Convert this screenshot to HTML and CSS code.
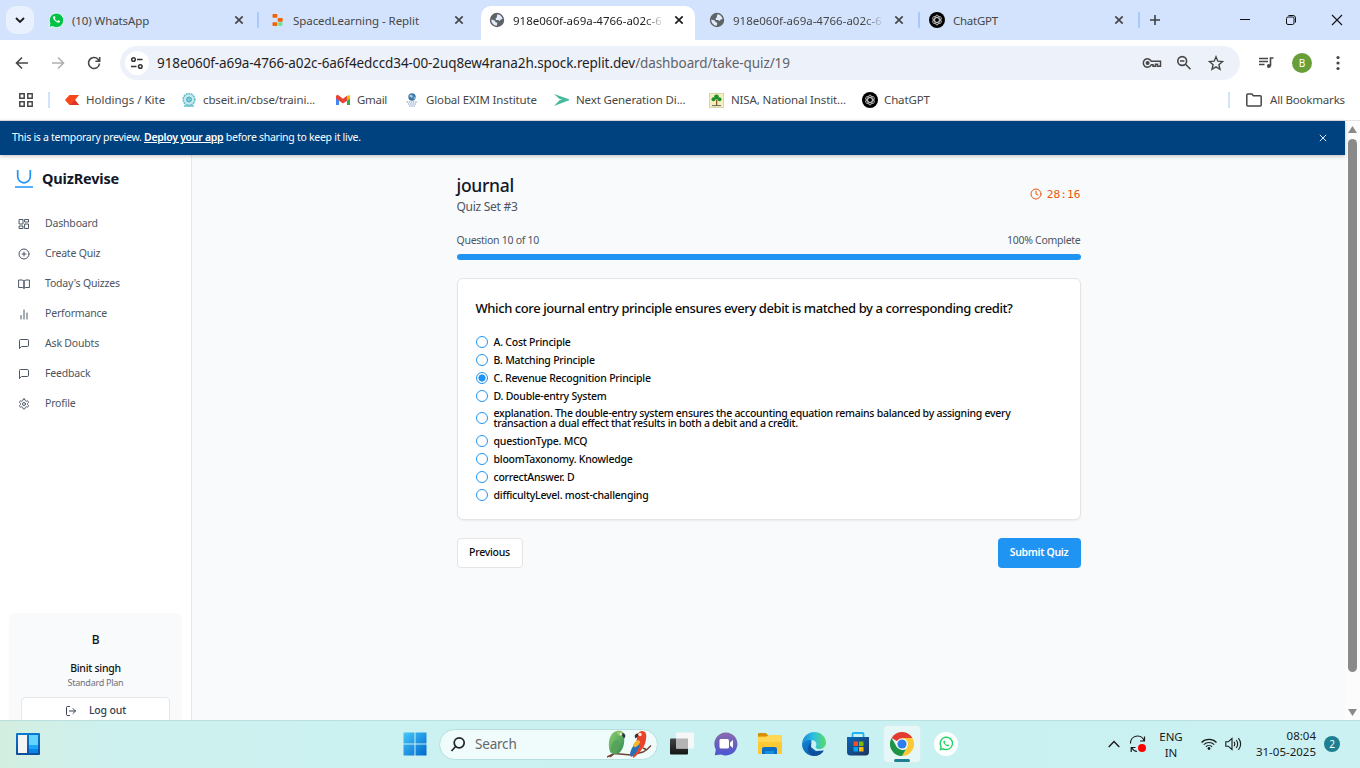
FILE: index.html
```html
<!DOCTYPE html>
<html lang="en">
<head>
<meta charset="utf-8">
<title>QuizRevise</title>
<link rel="stylesheet" href="styles.css">
</head>
<body>
<svg class="defs" width="0" height="0">
  <defs>
    <symbol id="x" viewBox="0 0 10 10"><path d="M1.300 1.300l7.400 7.400M8.700 1.300L1.300 8.700" stroke="currentColor" fill="none" stroke-width="1.700"/></symbol>
    <symbol id="globe" viewBox="0 0 16 16"><circle cx="8" cy="8" r="7.200" fill="#5f6368"/><path d="M8.500 2.300c2.600.4 4.600 2.300 5 4.700l-1.700.5-1.300 1.500-1.300-1-2.200.1-.5-1.600 1.300-1 .1-1.500zM2.300 7.500l3.400 1 1 1.700 1.600.5-.5 3c-3.200-.1-5.600-2.700-5.500-6.200z" fill="#e3ecfb"/></symbol>
    <symbol id="gpt" viewBox="0 0 16 16"><circle cx="8" cy="8" r="8" fill="#000"/><g fill="none" stroke="#ddd" stroke-width=".8"><ellipse cx="8" cy="8" rx="2.300" ry="4.900"/><ellipse cx="8" cy="8" rx="2.300" ry="4.900" transform="rotate(60 8 8)"/><ellipse cx="8" cy="8" rx="2.300" ry="4.900" transform="rotate(120 8 8)"/></g></symbol>
    <symbol id="wa" viewBox="0 0 24 24"><path d="M4.500 19.500l1-4A8.200 8.200 0 1 1 8.600 18.400z" fill="none" stroke="currentColor" stroke-width="2" stroke-linejoin="round"/><path d="M9 7.800c-1.200 1.100-.5 3 1.600 5.200 2.200 2.100 4.500 2.800 5.600 1.300.5-.8.100-1.100-1.500-1.800-.6-.2-.8.800-1.300.8-1 0-2.900-2-3-2.900 0-.4.700-.7.500-1.200-.5-1.500-1-2.200-1.900-1.400z" fill="currentColor"/></symbol>
    <symbol id="chat" viewBox="0 0 24 24"><path d="M21 15a2 2 0 0 1-2 2H7l-4 4V5a2 2 0 0 1 2-2h14a2 2 0 0 1 2 2z"/></symbol>
  </defs>
</svg>

<header class="tabstrip">
  <button class="tabsearch"><svg width="10" height="7" viewBox="0 0 10 7"><path d="M1 1l4 4 4-4" fill="none" stroke="#1f1f1f" stroke-width="1.900"/></svg></button>
  <div class="tab tab-whatsapp"><svg width="16" height="16" viewBox="0 0 16 16"><path d="M1 15.500l1-4A7.200 7.200 0 1 1 4.600 14.400z" fill="#00c244" stroke="#fff" stroke-width=".8"/><path d="M5.700 4.200c-1.300 1-.6 2.700 1.200 4.600 1.900 1.800 4 2.500 5 1.100.5-.9 0-1-1.500-1.600-.6-.2-.7.800-1.200.7C8.300 8.800 7 7.600 7 6.800c0-.4.500-.6.400-1.100-.4-1.400-.8-2.200-1.700-1.500z" fill="#fff"/></svg><span class="t">(10) WhatsApp</span><svg class="close" width="10" height="10"><use href="#x"/></svg></div>
  <i class="sep"></i>
  <div class="tab tab-replit"><svg width="16" height="16" viewBox="0 0 16 16"><rect x="2.500" y="2" width="4.800" height="3.800" rx=".8" fill="#f26207"/><rect x="7.700" y="6" width="5" height="3.700" rx=".8" fill="#f26207"/><rect x="2.500" y="10.200" width="4.800" height="3.800" rx=".8" fill="#f26207"/><rect x="8" y="10" width="4.500" height="4" rx="1.500" fill="#6ee391"/></svg><span class="t">SpacedLearning - Replit</span><svg class="close" width="10" height="10"><use href="#x"/></svg></div>
  <div class="tab active"><svg width="16" height="16"><use href="#globe"/></svg><span class="t fade">918e060f-a69a-4766-a02c-6</span><svg class="close" width="10" height="10"><use href="#x"/></svg></div>
  <div class="tab tab-copy"><svg width="16" height="16"><use href="#globe"/></svg><span class="t fade">918e060f-a69a-4766-a02c-6</span><svg class="close" width="10" height="10"><use href="#x"/></svg></div>
  <i class="sep"></i>
  <div class="tab tab-gpt"><svg width="16" height="16"><use href="#gpt"/></svg><span class="t">ChatGPT</span><svg class="close" width="10" height="10"><use href="#x"/></svg></div>
  <i class="sep"></i>
  <svg class="plus" width="12" height="12" viewBox="0 0 12 12"><path d="M6 1v10M1 6h10" stroke="#3c4043" stroke-width="1.600"/></svg>
  <div class="winctl">
    <svg width="12" height="12" viewBox="0 0 12 12"><path d="M1 5.500h10" stroke="#111"/></svg>
    <svg width="12" height="12" viewBox="0 0 12 12"><rect x="1.500" y="3" width="7.500" height="7.500" rx="1.500" fill="none" stroke="#111"/><path d="M3.500 1.500h4.500a2.500 2.500 0 0 1 2.500 2.500v4.500" fill="none" stroke="#111"/></svg>
    <svg width="12" height="12" viewBox="0 0 12 12"><path d="M1 1l10 10M11 1L1 11" stroke="#111" stroke-width="1.100"/></svg>
  </div>
</header>

<div class="toolbar">
  <svg class="tb" width="16" height="16" viewBox="0 0 16 16"><path d="M14 8H3M8 2.500L2.500 8 8 13.500" fill="none" stroke="#474747" stroke-width="1.600"/></svg>
  <svg class="tb" width="16" height="16" viewBox="0 0 16 16"><path d="M2 8h11M8 2.500L13.500 8 8 13.500" fill="none" stroke="#b0b0b0" stroke-width="1.600"/></svg>
  <svg class="tb" width="16" height="16" viewBox="0 0 16 16"><path d="M13.500 8.500A5.500 5.500 0 1 1 12 4.200L13.500 6M13.700 2v4.300H9.400" fill="none" stroke="#474747" stroke-width="1.600"/></svg>
  <div class="omnibox">
    <span class="site"><svg width="16" height="16" viewBox="0 0 16 16" fill="none" stroke="#333" stroke-width="1.500"><circle cx="4.500" cy="4.500" r="1.800"/><path d="M8 4.500h5.500M2 11.500h5.500"/><circle cx="11.300" cy="11.500" r="1.800"/></svg></span>
    <span class="t url">918e060f-a69a-4766-a02c-6a6f4edccd34-00-2uq8ew4rana2h.spock.replit.dev<em>/dashboard/take-quiz/19</em></span>
    <svg class="key" width="20" height="16" viewBox="0 0 20 16" fill="none" stroke="#474747" stroke-width="1.500"><path d="M9.300 6.200H18.500v5h-3v-2h-2v2h-2.500V9.800H9.300A4.200 4.200 0 1 1 9.300 6.200z"/><circle cx="5.600" cy="8" r="1.300" fill="#474747"/></svg>
    <svg width="16" height="16" viewBox="0 0 16 16" fill="none" stroke="#474747" stroke-width="1.600"><circle cx="6.200" cy="6" r="4.400"/><path d="M9.500 9.300l5 5M4 6h4.400"/></svg>
    <svg width="16" height="16" viewBox="0 0 16 16" fill="none" stroke="#474747" stroke-width="1.400"><path d="M8 1.800l1.800 4.400 4.700.4-3.600 3.100 1.100 4.600L8 11.900l-4 2.400 1.100-4.600L1.500 6.600l4.700-.4z"/></svg>
  </div>
  <svg class="media" width="16" height="16" viewBox="0 0 16 16" fill="none" stroke="#474747" stroke-width="1.600"><path d="M1 3.500h9M1 6.500h9M1 9.500h5.500M15.500 3h-3v8"/><circle cx="10.900" cy="11" r="2" fill="#474747" stroke="none"/></svg>
  <span class="avatar">B</span>
  <svg class="dots" width="4" height="16" viewBox="0 0 4 16" fill="#474747"><circle cx="2" cy="2.500" r="1.600"/><circle cx="2" cy="8" r="1.600"/><circle cx="2" cy="13.500" r="1.600"/></svg>
</div>

<nav class="bookmarks">
  <svg width="14" height="14" viewBox="0 0 14 14" fill="none" stroke="#474747" stroke-width="1.500"><path d="M.8.800h4.400v4.400H.8zM8.800.800h4.400v4.400H8.800zM.8 8.800h4.400v4.400H.8zM8.800 8.800h4.400v4.400H8.800z"/></svg>
  <i class="sep"></i>
  <a><svg width="14" height="14" viewBox="0 0 14 14"><path d="M0 7l4.500-5H14l-4 5 4 5H4.500z" fill="#f6461a"/><path d="M5 12l5-5 4 5z" fill="#db342c"/></svg><span class="t wide">Holdings / Kite</span></a>
  <a><svg width="14" height="14" viewBox="0 0 14 14"><circle cx="7" cy="6.500" r="5.800" fill="#c9eaf0" stroke="#63bfc9" stroke-width="1.600" stroke-dasharray="2 .6"/><circle cx="7" cy="6.500" r="2.500" fill="#7bcbd3" stroke="#4fa9b5"/><path d="M2 13h10" stroke="#63bfc9" stroke-width="1.500"/></svg><span class="t">cbseit.in/cbse/traini...</span></a>
  <a><svg width="14" height="14" viewBox="0 0 14 14"><path d="M0 3.500v8.500h3V6z" fill="#4285f4"/><path d="M14 3.500v8.500h-3V6z" fill="#34a853"/><path d="M11 2.800L14 2v3.500l-3 2.300z" fill="#fbbc04"/><path d="M0 3.500C0 2 1.500 1.500 2.500 2.300L7 5.800l4-3v5L7 10.500 0 5.500z" fill="#ea4335"/></svg><span class="t narrow">Gmail</span></a>
  <a><svg width="14" height="14" viewBox="0 0 14 14"><circle cx="7" cy="4" r="3.700" fill="#3f78a8"/><path d="M4 3l2-1.500L8 3 7 5zM8 5l2-1v2z" fill="#a5d0dd"/><path d="M1.500 9h11M3 11h8M4 13h6" stroke="#7697c3" stroke-width="1.200" stroke-dasharray="1.500 .7"/></svg><span class="t">Global EXIM Institute</span></a>
  <a><svg width="15" height="14" viewBox="0 0 15 14"><path d="M0 1l15 5.200v1L0 13l5.500-5.700 3-.6-3-.6z" fill="#45b99b"/></svg><span class="t">Next Generation Di...</span></a>
  <a><svg width="15" height="15" viewBox="0 0 15 15"><rect width="15" height="15" fill="#f3f0bd"/><rect x=".5" y=".5" width="14" height="14" fill="none" stroke="#d8d8ac"/><path d="M7 13V7h1.300v6z" fill="#93541e"/><circle cx="7.500" cy="4" r="2.400" fill="#218f2b"/><circle cx="4.500" cy="6.300" r="2" fill="#218f2b"/><circle cx="10.500" cy="6.300" r="2" fill="#218f2b"/><path d="M3 12.600h9" stroke="#666"/></svg><span class="t">NISA, National Instit...</span></a>
  <a class="gptlink"><svg width="16" height="16"><use href="#gpt"/></svg><span class="t">ChatGPT</span></a>
  <i class="sep"></i>
  <a class="all"><svg width="16" height="14" viewBox="0 0 16 14"><path d="M.8 12V2q0-1 1-1h4l1.600 1.800h6.800q1 0 1 1V12q0 1-1 1H1.800q-1 0-1-1z" fill="none" stroke="#474747" stroke-width="1.500"/></svg><span class="t">All Bookmarks</span></a>
</nav>

<div class="viewport">
  <div class="page">
    <div class="banner"><span class="t">This is a temporary preview. <b>Deploy your app</b> before sharing to keep it live.</span><svg width="8" height="8" viewBox="0 0 10 10"><path d="M1 1l8 8M9 1L1 9" stroke="#fff" fill="none" stroke-width="1.100"/></svg></div>
    <div class="app">
      <aside class="sidebar">
        <div class="brand"><svg width="18" height="18" viewBox="0 0 18 18" fill="none" stroke="#2094f3" stroke-width="1.700"><path d="M2.700 0v6.500a6.300 6.300 0 0 0 12.600 0V0M0 17h18"/></svg><span class="t">QuizRevise</span></div>
        <ul class="menu">
          <li><svg viewBox="0 0 24 24"><rect x="3" y="3" width="7" height="9"/><rect x="14" y="3" width="7" height="5"/><rect x="14" y="12" width="7" height="9"/><rect x="3" y="16" width="7" height="5"/></svg><span class="t">Dashboard</span></li>
          <li><svg viewBox="0 0 24 24"><circle cx="12" cy="12" r="10"/><path d="M8 12h8M12 8v8"/></svg><span class="t">Create Quiz</span></li>
          <li><svg viewBox="0 0 24 24"><path d="M2 4h6a4 4 0 0 1 4 4v13a3 3 0 0 0-3-2H2zM22 4h-6a4 4 0 0 0-4 4v13a3 3 0 0 1 3-2h7z"/></svg><span class="t">Today's Quizzes</span></li>
          <li><svg viewBox="0 0 24 24"><path d="M6 22v-7M12 22V4M18 22V10"/></svg><span class="t">Performance</span></li>
          <li><svg viewBox="0 0 24 24"><use href="#chat"/></svg><span class="t">Ask Doubts</span></li>
          <li><svg viewBox="0 0 24 24"><use href="#chat"/></svg><span class="t">Feedback</span></li>
          <li><svg viewBox="0 0 24 24"><path d="M12.220 2h-.44a2 2 0 0 0-2 2v.18a2 2 0 0 1-1 1.730l-.43.25a2 2 0 0 1-2 0l-.15-.08a2 2 0 0 0-2.730.730l-.22.380a2 2 0 0 0 .730 2.730l.15.1a2 2 0 0 1 1 1.720v.51a2 2 0 0 1-1 1.740l-.15.090a2 2 0 0 0-.730 2.730l.22.380a2 2 0 0 0 2.730.730l.15-.08a2 2 0 0 1 2 0l.43.25a2 2 0 0 1 1 1.730V20a2 2 0 0 0 2 2h.44a2 2 0 0 0 2-2v-.18a2 2 0 0 1 1-1.730l.43-.25a2 2 0 0 1 2 0l.15.08a2 2 0 0 0 2.730-.730l.22-.390a2 2 0 0 0-.730-2.730l-.15-.08a2 2 0 0 1-1-1.740v-.5a2 2 0 0 1 1-1.740l.15-.090a2 2 0 0 0 .730-2.730l-.22-.380a2 2 0 0 0-2.730-.730l-.15.08a2 2 0 0 1-2 0l-.43-.25a2 2 0 0 1-1-1.730V4a2 2 0 0 0-2-2z"/><circle cx="12" cy="12" r="3"/></svg><span class="t">Profile</span></li>
        </ul>
        <div class="user">
          <span class="initial">B</span>
          <span class="t name">Binit singh</span>
          <span class="t plan">Standard Plan</span>
          <button class="logout"><svg viewBox="0 0 24 24"><path d="M9 21H5a2 2 0 0 1-2-2V5a2 2 0 0 1 2-2h4M16 17l5-5-5-5M21 12H9"/></svg><span class="t">Log out</span></button>
        </div>
      </aside>
      <main class="content">
        <div class="quiz">
          <div class="head">
            <div><h1 class="t">journal</h1><p class="t">Quiz Set #3</p></div>
            <div class="timer"><svg viewBox="0 0 24 24"><circle cx="12" cy="12" r="10"/><path d="M12 6v6l4 2"/></svg><span class="t">28:16</span></div>
          </div>
          <div class="progress-row"><span class="t">Question 10 of 10</span><span class="t">100% Complete</span></div>
          <div class="progress"></div>
          <section class="card">
            <h2 class="t">Which core journal entry principle ensures every debit is matched by a corresponding credit?</h2>
            <div class="options">
              <label><i></i><span class="t">A. Cost Principle</span></label>
              <label><i></i><span class="t">B. Matching Principle</span></label>
              <label><i class="on"></i><span class="t">C. Revenue Recognition Principle</span></label>
              <label><i></i><span class="t">D. Double-entry System</span></label>
              <label class="long"><i></i><span>explanation. The double-entry system ensures the accounting equation remains balanced by assigning every transaction a dual effect that results in both a debit and a credit.</span></label>
              <label><i></i><span class="t">questionType. MCQ</span></label>
              <label><i></i><span class="t">bloomTaxonomy. Knowledge</span></label>
              <label><i></i><span class="t">correctAnswer. D</span></label>
              <label><i></i><span class="t">difficultyLevel. most-challenging</span></label>
            </div>
          </section>
          <div class="actions"><button class="prev">Previous</button><button class="submit">Submit Quiz</button></div>
        </div>
      </main>
    </div>
  </div>
  <div class="scrollbar"><svg width="9" height="7" viewBox="0 0 9 7"><path d="M4.500 0L9 7H0z" fill="#8a8a8a"/></svg><i></i><svg width="9" height="7" viewBox="0 0 9 7"><path d="M4.500 7L0 0h9z" fill="#8a8a8a"/></svg></div>
</div>

<footer class="taskbar">
  <svg class="widgets" width="24" height="22" viewBox="0 0 24 22"><defs><linearGradient id="wg" x2="0" y2="1"><stop stop-color="#0a78d1"/><stop offset="1" stop-color="#0c4f9c"/></linearGradient></defs><rect width="24" height="22" rx="1" fill="url(#wg)"/><rect x="2" y="2" width="9" height="18" fill="#f4f4f4"/><rect x="13" y="2" width="9" height="10" fill="#62d4fd"/><rect x="13" y="12" width="9" height="4" fill="#1ca4fb"/><rect x="13" y="16" width="9" height="4" fill="#0b84e8"/></svg>
  <div class="dock">
    <svg class="start" width="24" height="24" viewBox="0 0 24 24"><defs><linearGradient id="st" x2="1" y2="1"><stop stop-color="#46c8fb"/><stop offset="1" stop-color="#0067cb"/></linearGradient></defs><path d="M.5.500h11v11H.5zM12.500.500h11v11h-11zM.5 12.500h11v11H.5zM12.500 12.500h11v11h-11z" fill="url(#st)"/></svg>
    <div class="search"><svg width="16" height="16" viewBox="0 0 16 16" fill="none" stroke="#242424" stroke-width="1.700"><circle cx="9.200" cy="6.800" r="5"/><path d="M5.600 10.500L1.500 15"/></svg><span class="t">Search</span>
      <svg class="birds" width="45" height="28" viewBox="0 0 45 28"><defs><linearGradient id="gb" x2="1" y2="1"><stop stop-color="#8ed06f"/><stop offset="1" stop-color="#2f8a55"/></linearGradient></defs><path d="M0 27l7-3.500 17 1.500 12-3 4-2.500 4-4M3 27l5-4M40 20l-4-2" stroke="#6d4330" stroke-width="1.400" fill="none"/><path d="M3 22C0 12 3 2 10 1c5-1 8 2 7 6 1 6-1 13-5 16-3 2-7 1-9-1z" fill="url(#gb)"/><path d="M4 21c0-7 3-11 7-11 3 4 1 10-3 12z" fill="#57a35a"/><path d="M9.500 2.500c3-2 7-1 7.500 2-2 3-6 2-7.500-2z" fill="#9acb68"/><path d="M15.500 3c3.300.5 3.500 3.500 1.700 5.500L15 5.500z" fill="#2f3840"/><circle cx="13.800" cy="4" r=".9" fill="#fff"/><path d="M30 9c0-4 1.500-8 5-8 4 0 5 4 4 8-.6 7-5 12-10 17l-3 2c-1-4 2-13 4-19z" fill="#e9442a"/><path d="M23 24c1-6 4-10 8-11 3 2 0 8-4 12l-3 2z" fill="#2b6fb4"/><path d="M26 15c2-4 5-6 7-4 .5 2-2 5-5 6.500z" fill="#f8b82d"/><path d="M31 3.500c-3 0-4 2.500-2.500 5L31.500 6z" fill="#37322d"/><circle cx="33" cy="4.500" r="1.700" fill="#ffe8da"/></svg>
    </div>
    <svg class="taskview" width="24" height="24" viewBox="0 0 24 24"><defs><linearGradient id="tv" x2="0" y2="1"><stop stop-color="#444"/><stop offset="1" stop-color="#151515"/></linearGradient></defs><rect y="6.500" width="18" height="16" rx="1" fill="url(#tv)"/><rect x="6" y=".5" width="18" height="16" rx="1" fill="#f7f7f7"/><path d="M6 6.500h12v10H6z" fill="#b4b4b4"/></svg>
    <svg width="24" height="24" viewBox="0 0 24 24"><defs><linearGradient id="tm" x2="0" y2="1"><stop stop-color="#8b6aac"/><stop offset="1" stop-color="#4956d0"/></linearGradient></defs><path d="M12 .5a11.500 11.500 0 1 1-5 21.900L.8 23.200l1-5.600A11.500 11.500 0 0 1 12 .5z" fill="url(#tm)"/><rect x="5.500" y="7" width="9.500" height="9.500" rx="1.500" fill="#fff"/><path d="M16 10.500l3-2.500v8l-3-2.500z" fill="#fff"/></svg>
    <svg width="24" height="24" viewBox="0 0 24 24"><path d="M0 2q0-1 1-1h7l2.500 3H20v7H0z" fill="#d98f04"/><rect y="4.500" width="24" height="17.500" rx="1" fill="#fdc934"/><path d="M0 5h8l3-2h12q1 0 1 1v6H0z" fill="#ffd755"/><path d="M4 22v-5q0-2 2-2h11q2 0 2 2v5z" fill="#0b6ec4"/><path d="M7 19h9v3H7z" fill="#1391df"/></svg>
    <svg width="24" height="24" viewBox="0 0 24 24"><defs><linearGradient id="eg" x2="1"><stop stop-color="#1689d9"/><stop offset=".5" stop-color="#2fc1df"/><stop offset="1" stop-color="#58dc64"/></linearGradient><linearGradient id="eh" x2="1" y2="1"><stop stop-color="#1287d8"/><stop offset="1" stop-color="#0c4c99"/></linearGradient></defs><path d="M0 11.500C2 8 6 6.500 9.500 7L9 15l5 4 7.800-.5C19.700 22 16 24 12 24 5.400 24 0 18.600 0 12z" fill="url(#eh)"/><path d="M9.500 10.500c-3 7 3 12 12.300 8-2 3.500-6 5.700-10.300 5.300C5 22 4.500 13.500 9.500 10.500z" fill="#0e4f9b"/><path d="M0 11.500C.8 5 5.800 0 12 0c7 0 12 5 12 10.500 0 4-3 6.500-6.500 6.500-3 0-4.500-1.300-3.500-3 1.500-3-1-6-5-6-4 0-8 1.500-9 3.500z" fill="url(#eg)"/></svg>
    <svg width="24" height="24" viewBox="0 0 24 24"><defs><linearGradient id="sg" x2="1" y2="1"><stop stop-color="#0669bc"/><stop offset="1" stop-color="#21325c"/></linearGradient></defs><path d="M6.500 6V2q0-1 1-1h9q1 0 1 1v4" fill="none" stroke="#1eb4f4" stroke-width="1.800"/><path d="M1 5h22v15q0 3.500-3.500 3.500h-15Q1 23.500 1 20z" fill="url(#sg)"/><path d="M7.500 9.500H12V14H7.500z" fill="#f25022"/><path d="M13 9.500h4.500V14H13z" fill="#7fba00"/><path d="M7.500 15H12v4.500H7.500z" fill="#00a4ef"/><path d="M13 15h4.500v4.500H13z" fill="#ffb900"/></svg>
    <span class="running"><svg width="24" height="24" viewBox="0 0 24 24"><path d="M12 12L1.600 6A12 12 0 0 1 22.400 6z" fill="#e33b2e"/><path d="M12 6h10.400A12 12 0 0 1 12 24l5.200-9z" fill="#fcc934"/><path d="M1.600 6l5.200 9L12 18l3.800-.5L12 24A12 12 0 0 1 1.600 6z" fill="#1e9447"/><circle cx="12" cy="12" r="5.800" fill="#fff"/><circle cx="12" cy="12" r="4.600" fill="#2f7dea"/></svg></span>
    <span class="walogo"><svg width="18" height="18"><use href="#wa"/></svg></span>
  </div>
  <div class="tray">
    <svg width="12" height="8" viewBox="0 0 12 8"><path d="M.7 7L6 1.500 11.300 7" fill="none" stroke="#1b1b1b" stroke-width="1.400"/></svg>
    <svg class="sync" width="18" height="18" viewBox="0 0 18 18" fill="none" stroke="#1b1b1b" stroke-width="1.200"><path d="M1.500 8.500A7 7 0 0 1 15 5.500M15.500 1.500v4.500h-4.500M8 16.500a7 7 0 0 1-5.200-3.500M6.500 12.500H2.200v4.500"/><circle cx="13" cy="13" r="4" fill="#f00" stroke="none"/></svg>
    <div class="lang"><span class="t">ENG</span><span class="t">IN</span></div>
    <svg class="wifi" width="16" height="12" viewBox="0 0 16 12" fill="none" stroke="#1b1b1b" stroke-width="1.100"><path d="M.5 4.500a10.500 10.500 0 0 1 15 0M2.700 6.700a7.500 7.500 0 0 1 10.600 0M4.900 8.800a4.400 4.400 0 0 1 6.200 0"/><circle cx="8" cy="10.500" r="1.400" fill="#1b1b1b" stroke="none"/></svg>
    <svg width="17" height="14" viewBox="0 0 17 14" fill="none" stroke="#1b1b1b" stroke-width="1.100"><path d="M.8 4.800h2.400L7 1.500v11L3.200 9.200H.8zM9 4.800q1.500 2.200 0 4.400M11.200 3q3 4 0 8M13.400 1.200q4.500 5.800 0 11.600"/></svg>
    <div class="clock"><span class="t">08:04</span><span class="t">31-05-2025</span></div>
    <span class="badge">2</span>
  </div>
</footer>
</body>
</html>
```
FILE: styles.css
```css
* { box-sizing: border-box; }
body { margin: 0; width: 1360px; height: 768px; overflow: hidden; font-family: "Noto Sans", "Open Sans", sans-serif; font-size: 12px; color: #1f1f1f; display: flex; flex-direction: column; }
svg { display: block; flex: none; }
button { font: inherit; letter-spacing: inherit; padding: 0; border: 0; }
.defs { position: absolute; }
.t { white-space: nowrap; }

.tabstrip { height: 40px; background: #d3e3fd; display: flex; align-items: center; padding-left: 6px; color: #474747; font-size: 11.5px; }
.tabsearch { width: 28px; height: 28px; border-radius: 10px; background: #e9f1fe; display: grid; place-items: center; margin-right: 3px; }
.tab { height: 34px; margin-top: 6px; display: flex; align-items: center; align-self: flex-start; gap: 8px; padding-bottom: 6px; }
.tab .t { flex: 1; }
.tab-whatsapp { width: 221px; padding-left: 11px; padding-right: 14px; letter-spacing: -.1px; }
.tab-replit { width: 223px; padding-left: 12px; padding-right: 17px; gap: 7px; letter-spacing: -.06px; }
.tab.active { width: 214px; padding-left: 8px; padding-right: 11px; background: #fff; border-radius: 10px 10px 0 0; color: #1f1f1f; }
.tab-copy { width: 224px; padding-left: 14px; padding-right: 15px; }
.tab-gpt { width: 220px; padding-left: 10px; padding-right: 15px; letter-spacing: -.25px; }
.tabstrip .sep { width: 2px; height: 16px; background: #a8c7fa; border-radius: 1px; margin: 0 -1px; }
.tab .close { color: #474747; }
.tab.active .close { color: #1f1f1f; }
.tab .fade { -webkit-mask-image: linear-gradient(to right, #000 86%, transparent 99%); mask-image: linear-gradient(to right, #000 86%, transparent 99%); }
.plus { margin-left: 10px; }
.winctl { margin-left: auto; padding-right: 17px; display: flex; gap: 34px; }

.toolbar { height: 46px; padding: 0 20px 0 14px; display: flex; align-items: center; background: #fff; }
.toolbar .tb { margin-right: 20px; }
.omnibox { width: 1120px; height: 34px; margin-left: -2px; padding: 0 16px 0 5px; border-radius: 17px; background: #edf1fa; display: flex; align-items: center; gap: 16px; }
.site { width: 24px; height: 24px; border-radius: 50%; background: #fff; display: grid; place-items: center; margin-right: -8px; }
.url { flex: 1; font-size: 13.5px; letter-spacing: -.095px; padding-bottom: 1px; }
.url em { font-style: normal; color: #5f6368; }
.key { margin-right: -2px; }
.media { margin-left: 18px; }
.avatar { width: 20px; height: 20px; margin-left: 18px; border-radius: 50%; background: #689f38; color: #fff; font-size: 10px; line-height: 20px; text-align: center; }
.dots { margin-left: auto; }

.bookmarks { height: 34px; padding: 0 0 6px 19px; display: grid; grid-template-columns: 29px 17px 117px 154px 69px 149px 155px 153px 366px 18px 1fr; align-items: center; background: #fff; color: #474747; font-size: 11.5px; letter-spacing: -.14px; }
.bookmarks a { display: flex; align-items: center; gap: 7px; }
.bookmarks .t { padding-bottom: 2px; }
.bookmarks .sep { width: 2px; height: 16px; background: #d3e3fd; }
.bookmarks .wide { letter-spacing: 0; }
.bookmarks .narrow { letter-spacing: -.3px; }
.bookmarks .gptlink { gap: 6px; }
.bookmarks .all { gap: 8px; letter-spacing: -.19px; }

.viewport { height: 600px; display: flex; border-top: 1px solid #e4e4e4; }
.page { width: 1345px; display: flex; flex-direction: column; }
.banner { height: 34px; flex: none; padding: 0 18px 0 12px; display: flex; align-items: center; justify-content: space-between; background: #00417f; color: #fff; font-size: 10.5px; letter-spacing: -.28px; box-shadow: 0 1px 4px rgba(0, 0, 0, .25); z-index: 1; }
.banner .t { padding-bottom: 2px; }
.banner b { text-decoration: underline; font-weight: 600; }
.app { flex: 1; display: flex; min-height: 0; overflow: hidden; }
.sidebar { width: 192px; flex: none; border-right: 1px solid #e5e7eb; background: #fff; display: flex; flex-direction: column; overflow: hidden; }
.brand { height: 47px; flex: none; padding: 0 0 0 15px; display: flex; align-items: center; gap: 9px; font-size: 14.5px; letter-spacing: -.18px; font-weight: 700; color: #111827; }
.brand .t { padding-bottom: 2px; }
.menu { list-style: none; flex: none; margin: 6px 0 0; padding: 0 0 0 18px; color: #4b5563; font-size: 10.5px; letter-spacing: -.18px; }
.menu li { height: 30px; display: flex; align-items: center; gap: 15px; }
.menu svg { margin-top: 2px; }
.menu svg, .logout svg, .timer svg { width: 12px; height: 12px; fill: none; stroke: currentColor; stroke-width: 2; stroke-linecap: round; stroke-linejoin: round; }
.user { width: 173px; height: 140px; flex: none; margin: 195px 0 0 9px; padding: 18px 12px 0; border-radius: 6px; background: #f9fafb; display: flex; flex-direction: column; align-items: center; letter-spacing: -.26px; }
.initial { font-size: 12px; line-height: 18px; font-weight: 500; color: #111; }
.name { font-size: 10.5px; line-height: 15px; margin-top: 12px; font-weight: 500; color: #111; }
.plan { font-size: 9px; line-height: 12px; margin-top: 1px; color: #6b7280; }
.logout { width: 149px; height: 27px; flex: none; margin-top: 8px; border: 1px solid #e5e7eb; border-radius: 4px; background: #fff; display: flex; align-items: center; justify-content: center; gap: 12px; font-size: 10.5px; letter-spacing: -.15px; font-weight: 500; color: #374151; }
.logout .t { padding-bottom: 2px; }

.content { flex: 1; background: #f9fafc; display: flex; justify-content: center; }
.quiz { width: 624px; padding-top: 18px; display: flex; flex-direction: column; }
.head { display: flex; justify-content: space-between; align-items: center; height: 42px; }
h1 { margin: 0; font-size: 17.5px; line-height: 24px; letter-spacing: -.3px; font-weight: 500; color: #111827; }
.head p { margin: 0; padding-top: 1px; height: 18px; font-size: 12px; line-height: 18px; letter-spacing: -.27px; color: #4b5563; }
.timer { display: flex; align-items: center; gap: 5px; color: #ea580c; font: 11.2px "DejaVu Sans Mono", monospace; }
.progress-row { margin-top: 17px; height: 15px; display: flex; justify-content: space-between; align-items: center; font-size: 10.5px; letter-spacing: -.27px; color: #4b5563; }
.progress { height: 6px; margin-top: 7px; border-radius: 3px; background: #2094f3; }
.card { height: 242px; margin-top: 18px; padding: 19px 18px; border: 1px solid #e5e5e5; border-radius: 6px; background: #fff; box-shadow: 0 1px 2px rgba(0, 0, 0, .06); }
h2 { margin: 0; font-size: 13px; line-height: 21px; letter-spacing: -.41px; font-weight: 500; color: #0a0a0a; }
.options { margin-top: 17px; display: flex; flex-direction: column; gap: 6px; font-size: 10.5px; line-height: 10px; letter-spacing: -.23px; font-weight: 500; color: #0a0a0a; }
.options label { height: 12px; display: flex; align-items: center; gap: 6px; }
.options .long { height: 21px; width: 545px; padding-bottom: 2px; letter-spacing: -.267px; }
.options i { width: 12px; height: 12px; flex: none; border: 1px solid #2094f3; border-radius: 50%; }
.options i.on { background: radial-gradient(circle, #2094f3 3.300px, #fff 3.900px); }
.actions { margin-top: 18px; display: flex; justify-content: space-between; }
.actions button { height: 30px; padding-bottom: 2px; border-radius: 4px; font-size: 10.5px; font-weight: 500; }
.prev { width: 66px; border: 1px solid #e5e5e5; background: #fff; color: #0a0a0a; letter-spacing: -.25px; }
.actions .submit { width: 83px; background: #2094f3; color: #fff; font-weight: 600; letter-spacing: -.33px; }
.scrollbar { width: 15px; background: #fcfcfc; display: flex; flex-direction: column; align-items: center; padding: 5px 0 4px; }
.scrollbar i { width: 9px; height: 533px; margin: 6px 0 auto; border-radius: 5px; background: #8a8a8a; }

.taskbar { height: 48px; padding: 0 20px 1px 16px; border-top: 1px solid #b9e0df; display: grid; grid-template-columns: 387px 1fr auto; align-items: center; background: linear-gradient(90deg, #d3eee0 0, #cdf1ef 110px, #c9f1f1 700px, #cbf1f3 100%); color: #1b1b1b; }
.dock { display: flex; align-items: center; gap: 20px; }
.search { width: 219px; height: 31px; margin: 0 -8px 0 -8px; padding: 0 5px 0 10px; display: flex; align-items: center; gap: 9px; border-radius: 16px; border: 1px solid #b8dfdf; background: #f0fbfb; font-size: 13.5px; letter-spacing: -.2px; color: #666; }
.birds { margin-left: auto; }
.running { width: 38px; height: 38px; margin: 0 -7px; display: grid; place-items: center; border-radius: 4px; background: #e6f7f7; border: 1px solid #d6eeee; position: relative; }
.running::after { content: ""; position: absolute; left: 10px; bottom: 0; width: 16px; height: 3px; border-radius: 2px; background: #1e7f90; }
.walogo { width: 24px; height: 24px; border-radius: 50%; background: #fff; color: #25d366; display: grid; place-items: center; }
.tray { display: flex; align-items: center; font-size: 11.5px; }
.sync { margin-left: 9px; }
.lang { width: 24px; margin: 2px 18px 0 12px; display: flex; flex-direction: column; align-items: center; line-height: 16px; }
.wifi { margin-right: 8px; }
.clock { width: 60px; margin: 0 8px 0 14px; display: flex; flex-direction: column; align-items: flex-end; line-height: 16px; }
.badge { width: 16px; height: 16px; border-radius: 50%; background: #1e7f90; color: #fff; font-size: 10px; line-height: 16px; text-align: center; }
```
